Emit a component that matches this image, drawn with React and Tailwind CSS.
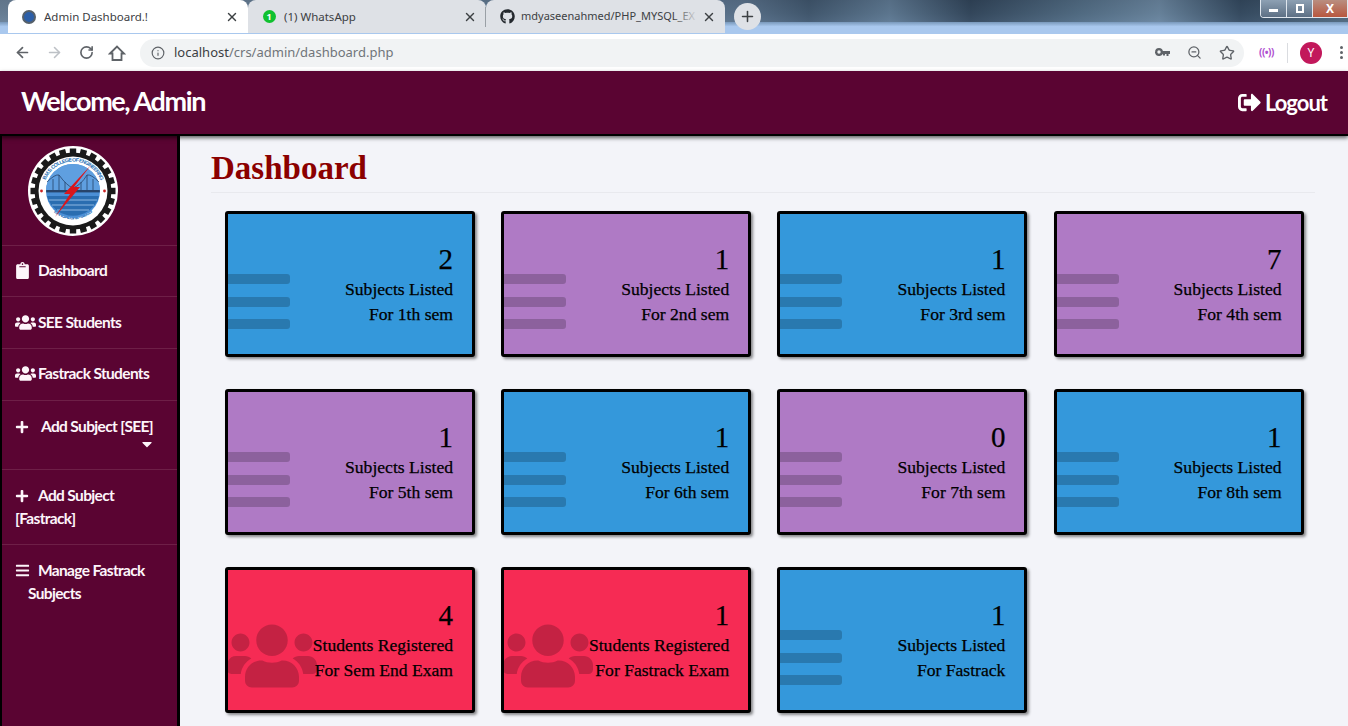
import { ArrowLeft, ArrowRight, RotateCw, Info, X, Plus, ZoomOut, Star } from 'lucide-react';
import { FaClipboard, FaUsers, FaPlus, FaBars, FaSignOutAlt, FaGithub, FaCaretDown } from 'react-icons/fa';

const CARDS = [
  { n: 2, a: 'Subjects Listed', b: 'For 1th sem', c: 'blue' },
  { n: 1, a: 'Subjects Listed', b: 'For 2nd sem', c: 'purple' },
  { n: 1, a: 'Subjects Listed', b: 'For 3rd sem', c: 'blue' },
  { n: 7, a: 'Subjects Listed', b: 'For 4th sem', c: 'purple' },
  { n: 1, a: 'Subjects Listed', b: 'For 5th sem', c: 'purple' },
  { n: 1, a: 'Subjects Listed', b: 'For 6th sem', c: 'blue' },
  { n: 0, a: 'Subjects Listed', b: 'For 7th sem', c: 'purple' },
  { n: 1, a: 'Subjects Listed', b: 'For 8th sem', c: 'blue' },
  { n: 4, a: 'Students Registered', b: 'For Sem End Exam', c: 'red' },
  { n: 1, a: 'Students Registered', b: 'For Fastrack Exam', c: 'red' },
  { n: 1, a: 'Subjects Listed', b: 'For Fastrack', c: 'blue' },
];

const BG = { blue: 'bg-[#3498db]', purple: 'bg-[#af7ac5]', red: 'bg-[#f62b54]' };

function Logo({ size = 92 }) {
  const teeth = Array.from({ length: 24 }, (_, i) => i * 15);
  return (
    <svg width={size} height={size} viewBox="0 0 92 92">
      <circle cx="46" cy="46" r="45" fill="#fff" />
      {teeth.map((d) => (
        <rect key={d} x="42.8" y="3.5" width="6.4" height="7" fill="#1a1a1a" transform={`rotate(${d} 46 46)`} />
      ))}
      <circle cx="46" cy="46" r="38.5" fill="#1a1a1a" />
      <circle cx="46" cy="46" r="34.5" fill="#fff" />
      <defs>
        <path id="logoTop" d="M 16.5 46 A 29.5 29.5 0 0 1 75.5 46" />
        <path id="logoBottom" d="M 19 55 A 28.5 28.5 0 0 0 73 55" />
      </defs>
      <text fontSize="5.2" fontWeight="700" fill="#1e6fb5" fontFamily="Liberation Sans, sans-serif">
        <textPath href="#logoTop" startOffset="50%" textAnchor="middle">B.M.S. COLLEGE OF ENGINEERING</textPath>
      </text>
      <text fontSize="5" fontWeight="700" fill="#1e6fb5" fontFamily="Liberation Sans, sans-serif">
        <textPath href="#logoBottom" startOffset="50%" textAnchor="middle">BANGALORE - 560019</textPath>
      </text>
      <circle cx="14.5" cy="46" r="1.4" fill="#c22" />
      <circle cx="77.5" cy="46" r="1.4" fill="#c22" />
      <circle cx="46" cy="46" r="27" fill="#4b8fd6" />
      <path d="M19 46 a27 27 0 0 1 54 0 z" fill="#5f9fe0" />
      <path d="M20 51 h52 a27 27 0 0 1 -52 0z" fill="#2a6db0" />
      <rect x="19.2" y="45" width="53.6" height="2.4" fill="#27446b" />
      <path d="M20 37 Q28 29 32 30 Q40 41 46 43 Q54 40 60 30 Q64 29 72 37" fill="none" stroke="#27446b" strokeWidth="0.8" />
      <path d="M32 30v16M60 30v16M38 37v8M54 37v8M26 34v11M66 34v11" stroke="#27446b" strokeWidth="0.8" />
      <path d="M22 55h48M25 60h42M30 65h32" stroke="#8db8e2" strokeWidth="1" />
      <path d="M64 20 L47 42 L53 42 L28 72 L43 49 L37 49z" fill="#d9161c" />
    </svg>
  );
}

function Tab({ active, icon, title, fade, divider, w, gap = 'ml-[7px]' }) {
  return (
    <div className={`relative flex items-center h-[33px] pl-[13px] pr-[9px] rounded-t-lg text-[11.5px] text-[#3c4043] ${w} ${active ? 'bg-white' : 'bg-[#dee1e6]'}`}>
      <span className="w-4 h-4 flex items-center justify-center shrink-0">{icon}</span>
      <span className={`relative flex-1 overflow-hidden whitespace-nowrap ${gap} ${fade ? 'text-[11px]' : ''}`}>
        {title}
        {fade && <span className="absolute right-0 top-0 bottom-0 w-6 bg-[linear-gradient(90deg,rgba(222,225,230,0),#dee1e6)]" />}
      </span>
      <X size={14} strokeWidth={2.4} className="shrink-0 ml-1 text-[#3c4043]" />
      {divider && <span className="absolute right-0 top-[7px] h-5 w-px bg-[#9aa0a6]" />}
    </div>
  );
}

function BrowserChrome() {
  return (
    <div className="font-['Noto_Sans','Liberation_Sans',sans-serif]">
      <div className="relative h-[34px] flex items-start pl-2 overflow-hidden bg-[linear-gradient(180deg,#2f4358_0%,#4f6c86_40%,#6f8fb0_62%,#a9c8ee_78%,#a9c8ee_100%)]">
        <div className="absolute inset-x-0 top-0 h-[22px] bg-[linear-gradient(90deg,#6d8196_0%,#5a7088_55%,#3d5166_60%,#5f7890_66%,#2c3d50_72%,#50697f_80%,#6c869e_86%,#2f4256_92%,#4d6478_100%)] opacity-80" />
        <Tab w="w-[240px]" active title="Admin Dashboard.!" icon={<span className="w-[14px] h-[14px] rounded-full bg-[#2c5fa8] border-2 border-[#55606a]" />} />
        <Tab
          w="w-[238px]"
          title="(1) WhatsApp"
          divider
          icon={<span className="w-[13px] h-[13px] rounded-full bg-[#10c12f] text-white text-[9px] leading-[13px] text-center font-bold">1</span>}
        />
        <Tab w="w-[239px]" gap="ml-[6px]" fade title="mdyaseenahmed/PHP_MYSQL_EX" icon={<FaGithub size={15} className="text-[#24292e]" />} />
        <div className="relative ml-[9px] mt-[3px] w-[27px] h-[27px] rounded-full bg-[#dee1e6] flex items-center justify-center">
          <Plus size={17} strokeWidth={2.2} className="text-[#3c4043]" />
        </div>
        <div className="absolute right-0 top-0 flex h-[18px] w-[88px] rounded-bl border border-[#dfe6ee] border-t-0 overflow-hidden">
          <div className="flex-1 bg-[linear-gradient(180deg,#8da0b3,#5d7085)] flex items-center justify-center border-r border-[#dfe6ee]">
            <span className="w-[9px] h-[3px] bg-white mt-[4px]" />
          </div>
          <div className="flex-1 bg-[linear-gradient(180deg,#8da0b3,#5d7085)] flex items-center justify-center border-r border-[#dfe6ee]">
            <span className="w-[8px] h-[9px] border-2 border-white" />
          </div>
          <div className="w-[34px] bg-[linear-gradient(180deg,#b98e80,#b8573f)] text-white text-[12px] font-bold text-center leading-[17px]">X</div>
        </div>
      </div>
      <div className="h-[37px] bg-white flex items-center pl-[14px] text-[#5f6368]">
        <ArrowLeft size={17} strokeWidth={2.4} />
        <ArrowRight size={17} strokeWidth={2.2} className="ml-[15px] text-[#bdc1c6]" />
        <RotateCw size={15} strokeWidth={2.6} className="ml-[16px]" />
        <svg width="18" height="18" viewBox="0 0 18 18" fill="none" stroke="currentColor" strokeWidth="1.8" className="ml-[14px]">
          <path d="M2 9.5 L9 2.5 L16 9.5 H13.5 V16 H4.5 V9.5 Z" strokeLinejoin="miter" />
        </svg>
        <div className="ml-[14px] w-[1104px] h-7 rounded-full bg-[#f1f3f4] flex items-center pl-[11px] pr-[9px]">
          <Info size={14} strokeWidth={2} />
          <span className="ml-[9px] text-[13px] text-[#3c4043]">
            localhost<span className="text-[#70757a]">/crs/admin/dashboard.php</span>
          </span>
          <svg width="15" height="9" viewBox="0 0 15 9" className="ml-auto text-[#5f6368]" fill="currentColor">
            <path d="M4 0a4 4 0 1 1-3.9 5H0V4h.1A4 4 0 0 1 4 0zm0 2.3a1.7 1.7 0 1 0 0 3.4 1.7 1.7 0 0 0 0-3.4zM7 3h8v3h-1.5v2h-2V6H10v1.5H8V6H7z" />
          </svg>
          <ZoomOut size={15} strokeWidth={2} className="ml-[17px]" />
          <Star size={16} strokeWidth={2} className="ml-[17px]" />
        </div>
        <span className="ml-[15px] w-[16px] text-[10px] font-bold text-[#b04fd0] tracking-tighter whitespace-nowrap">((•))</span>
        <span className="ml-[12px] w-px h-5 bg-[#dadce0]" />
        <span className="ml-[12px] w-[22px] h-[22px] rounded-full bg-[#c2185b] text-white text-[12px] text-center leading-[22px]">Y</span>
        <span className="ml-[18px] flex flex-col gap-[2px]">
          <span className="w-[3px] h-[3px] rounded-full bg-[#5f6368]" />
          <span className="w-[3px] h-[3px] rounded-full bg-[#5f6368]" />
          <span className="w-[3px] h-[3px] rounded-full bg-[#5f6368]" />
        </span>
      </div>
    </div>
  );
}

function NavItem({ className = '', children }) {
  return <div className={`border-b border-[#6e1f47] pl-[13px] pr-2 ${className}`}>{children}</div>;
}

function Sidebar() {
  return (
    <aside className="w-[180px] shrink-0 border-l-2 border-r-[3px] border-black bg-[#5a0432] text-[#fdf5fa] text-[15.5px] font-bold leading-[23px] font-['Lato','Liberation_Sans',sans-serif] tracking-[-0.65px]">
      <div className="h-[110px] border-b border-[#6e1f47] pt-[9px] pl-[25px]">
        <Logo size={92} />
      </div>
      <NavItem className="h-[51px] flex items-center pb-[2px]">
        <FaClipboard size={17} className="-ml-[1px]" />
        <span className="ml-[7px]">Dashboard</span>
      </NavItem>
      <NavItem className="h-[52px] flex items-center">
        <FaUsers size={21} />
        <span className="ml-[2px]">SEE Students</span>
      </NavItem>
      <NavItem className="h-[52px] flex items-center pb-[2px]">
        <FaUsers size={21} />
        <span className="ml-[2px]">Fastrack Students</span>
      </NavItem>
      <NavItem className="h-[69px] pt-[14px]">
        <div className="flex items-center">
          <FaPlus size={14} />
          <span className="ml-[12px] whitespace-nowrap">Add Subject [SEE]</span>
        </div>
        <div className="flex justify-end pr-[14px] -mt-[2px]">
          <FaCaretDown size={16} />
        </div>
      </NavItem>
      <NavItem className="h-[75px] pt-[14px]">
        <div className="flex items-center">
          <FaPlus size={14} />
          <span className="ml-[9px]">Add Subject</span>
        </div>
        <div>[Fastrack]</div>
      </NavItem>
      <div className="pl-[13px] pt-[14px]">
        <div className="flex items-center">
          <FaBars size={15} />
          <span className="ml-[8px]">Manage Fastrack</span>
        </div>
        <div className="pl-[13px]">Subjects</div>
      </div>
    </aside>
  );
}

function StatCard({ n, a, b, c }) {
  return (
    <div className={`relative h-[146px] overflow-hidden rounded-[3px] border-[3px] border-black shadow-[2px_2px_3px_rgba(0,0,0,0.45)] ${BG[c]}`}>
      {c === 'red' ? (
        <FaUsers size={90} className="absolute -left-[1px] top-[41px] text-black/20" />
      ) : (
        <div className="absolute -left-[10px] top-[60px] flex flex-col gap-[12.5px]">
          <span className="block w-[72px] h-[10px] rounded-[3px] bg-black/20" />
          <span className="block w-[72px] h-[10px] rounded-[3px] bg-black/20" />
          <span className="block w-[72px] h-[10px] rounded-[3px] bg-black/20" />
        </div>
      )}
      <div className="relative h-full pt-[27px] pr-[19px] text-right text-black font-['Liberation_Serif',serif] [-webkit-text-stroke:0.25px_black]">
        <div className="text-[29px] leading-[36px]">{n}</div>
        <div className="text-[17.6px] leading-[25px]">{a}</div>
        <div className="text-[17.6px] leading-[25px]">{b}</div>
      </div>
    </div>
  );
}

export default function App() {
  return (
    <div className="h-[726px] overflow-hidden flex flex-col bg-[#f3f4f9]">
      <BrowserChrome />
      <header className="relative z-10 h-[65px] shrink-0 border-b-2 border-black bg-[#5a0432] text-white shadow-[0_2px_4px_rgba(0,0,0,0.6)] flex items-center justify-between pl-[21px] pr-[21px] font-['Lato','Liberation_Sans',sans-serif] font-bold">
        <span className="text-[27px] leading-none -mt-[4px] tracking-[-1.4px]">Welcome, Admin</span>
        <span className="flex items-center text-[22px] leading-none tracking-[-1px]">
          <FaSignOutAlt size={23} />
          <span className="ml-[4px]">Logout</span>
        </span>
      </header>
      <div className="flex flex-1 min-h-0">
        <Sidebar />
        <main className="flex-1 pl-[31px] pr-[33px]">
          <h1 className="h-[57px] border-b border-[#e8e9ee] pt-[12px] text-[33px] leading-[40px] font-bold text-[#8b0000] font-['Liberation_Serif',serif]">
            Dashboard
          </h1>
          <div className="mt-[18px] pl-[14px] grid grid-cols-[repeat(4,250px)] gap-x-[26.2px] gap-y-[32px]">
            {CARDS.map((card, i) => (
              <StatCard key={i} {...card} />
            ))}
          </div>
        </main>
      </div>
    </div>
  );
}
